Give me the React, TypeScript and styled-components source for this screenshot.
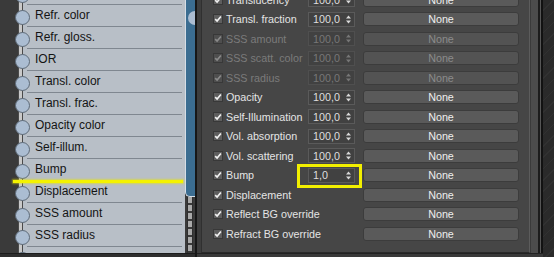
import React from 'react';
import styled, { createGlobalStyle } from 'styled-components';

const GlobalStyle = createGlobalStyle`
  html, body {
    margin: 0;
    padding: 0;
    background: #2b2b2b;
  }
  body {
    width: 554px;
    height: 257px;
    overflow: hidden;
  }
`;

const Screen = styled.div`
  display: flex;
  width: 554px;
  height: 257px;
  overflow: hidden;
  background: #2b2b2b;
`;

/* ---------- left: node editor ---------- */

const NodeArea = styled.div`
  position: relative;
  flex: none;
  width: 195px;
  height: 257px;
  display: flex;
  flex-direction: column;
  background: #3a3a3a;
`;

const NodeBody = styled.div`
  display: flex;
  height: 253px;
  padding-left: 22px;
  overflow: hidden;
`;

const SlotList = styled.div`
  width: 163px;
  margin-top: -17px;
  background: #b8bfc7;
`;

const Slot = styled.div`
  position: relative;
  display: flex;
  align-items: flex-start;
  height: 22px;

  &::before {
    content: '';
    position: absolute;
    left: -4px;
    top: 0;
    bottom: 0;
    width: 3px;
    background: repeating-linear-gradient(#c9c9c9 0 6px, #4a4a4a 6px 8px);
    border-left: 1px solid #4a4a4a;
    border-right: 1px solid #4a4a4a;
  }
`;

const Pin = styled.span`
  position: relative;
  z-index: 1;
  flex: none;
  width: 13px;
  height: 13px;
  margin: 5px 0 0 -7px;
  border-radius: 50%;
  background: #abbdd2;
  border: 1px solid #5d6a78;
`;

const SlotLabel = styled.span`
  flex: 1;
  height: 22px;
  box-sizing: border-box;
  margin: 0 3px 0 -3px;
  padding-left: 8px;
  border-bottom: 1px solid #7f8790;
  font-family: 'Liberation Sans', Arial, sans-serif;
  font-size: 12px;
  line-height: 21px;
  color: #141414;
  white-space: nowrap;
`;

const OutColumn = styled.div`
  display: flex;
  flex-direction: column;
  width: 10px;
  margin-top: 0;
`;

const OutStrip = styled.div`
  position: relative;
  height: 197px;
  box-sizing: border-box;
  overflow: hidden;
  background: #3b6d91;
  border-left: 1px solid #d6dee6;
  border-bottom: 1px solid #d6dee6;
  border-bottom-left-radius: 5px;
`;

const OutPin = styled.span`
  position: absolute;
  left: 2px;
  top: 11px;
  width: 14px;
  height: 14px;
  border-radius: 50%;
  background: #abbdd2;
`;

const OutChain = styled.div`
  flex: 1;
  margin: 0 2px 0 2px;
  background: repeating-linear-gradient(#a9a9a9 0 6px, #3a3a3a 6px 8px);
  border-left: 1px solid #2e2e2e;
  border-right: 1px solid #2e2e2e;
`;

const NodeFooter = styled.div`
  flex: 1;
  background: #2e2e2e;
  border-top: 1px solid #1c1c1c;
`;

const Marker = styled.div`
  position: absolute;
  left: 13px;
  top: 180px;
  width: 170px;
  height: 3px;
  background: #f4f200;
  box-shadow: 0 0 2px 1px rgba(235, 230, 0, 0.55);
  z-index: 5;
`;

/* ---------- right: parameters rollout ---------- */

const ParamPanel = styled.div`
  flex: none;
  width: 348px;
  height: 257px;
  box-sizing: border-box;
  display: flex;
  flex-direction: column;
  border-left: 2px solid #171717;
  background: #3d3d3d;
`;

const ParamMain = styled.div`
  display: flex;
  height: 253px;
  padding-left: 4px;
`;

const Rollout = styled.div`
  width: 330px;
  box-sizing: border-box;
  overflow: hidden;
  background: #464646;
  border-left: 1px solid #303030;
  border-right: 1px solid #5c5c5c;
  border-bottom: 1px solid #2a2a2a;
`;

const ParamList = styled.div`
  margin-top: -10.25px;
  padding-left: 11px;
`;

const ParamRow = styled.div`
  display: grid;
  grid-template-columns: 13px 82px 55px 156px;
  align-items: center;
  height: 19.5px;
`;

const Check = styled.span<{ $disabled?: boolean }>`
  display: flex;
  width: 10px;
  height: 10px;
  box-sizing: border-box;
  background: ${(p) => (p.$disabled ? '#4e4e4e' : '#5e5e5e')};
  border: 1px solid #383838;

  svg {
    display: block;
  }
`;

const ParamLabel = styled.span<{ $disabled?: boolean }>`
  font-family: 'Liberation Sans', Arial, sans-serif;
  font-size: 10.75px;
  color: ${(p) => (p.$disabled ? '#7b7b7b' : '#e4e4e4')};
  white-space: nowrap;
`;

const Spinner = styled.span<{ $disabled?: boolean; $marked?: boolean }>`
  position: relative;
  display: flex;
  align-items: center;
  justify-content: space-between;
  width: 47px;
  height: 15px;
  box-sizing: border-box;
  padding: 0 3px 0 4px;
  background: #414141;
  border: 1px solid ${(p) => (p.$disabled ? '#4f4f4f' : '#5a5a5a')};
  font-family: 'Liberation Sans', Arial, sans-serif;
  font-size: 10.75px;
  color: ${(p) => (p.$disabled ? '#777' : '#dedede')};

  ${(p) =>
    p.$marked &&
    `
    &::after {
      content: '';
      position: absolute;
      left: -12px;
      right: -8px;
      top: -5px;
      bottom: -6px;
      border: 3px solid #f2ef00;
    }
  `}
`;

const MapButton = styled.span<{ $disabled?: boolean }>`
  grid-column: 4;
  display: flex;
  align-items: center;
  justify-content: center;
  height: 14px;
  box-sizing: border-box;
  border-radius: 3px;
  background: ${(p) => (p.$disabled ? '#535353' : '#5a5a5a')};
  border: 1px solid #3c3c3c;
  font-family: 'Liberation Sans', Arial, sans-serif;
  font-size: 10.75px;
  color: ${(p) => (p.$disabled ? '#8b8b8b' : '#eeeeee')};
`;

const ScrollTrack = styled.div`
  width: 7px;
  background: #4c4c4c;
  border-left: 1px solid #3a3a3a;
`;

const PanelEdge = styled.div`
  width: 5px;
  background: linear-gradient(to right, #1c1c1c 0 2px, #565656 2px 3px, #121212 3px 5px);
`;

const ParamFooter = styled.div`
  flex: 1;
  background: #393939;
  border-top: 1px solid #222;
`;

const Viewport = styled.div`
  flex: 1;
  background: repeating-linear-gradient(135deg, #2a2a2a 0 7px, #313131 7px 8px);
`;

const CheckMark: React.FC<{ color: string }> = ({ color }) => (
  <svg width="8" height="8" viewBox="0 0 8 8">
    <path d="M1.2 4.1 L3.1 6.1 L6.9 1.4" fill="none" stroke={color} strokeWidth="1.6" />
  </svg>
);

const Arrows: React.FC<{ color: string }> = ({ color }) => (
  <svg width="5" height="9" viewBox="0 0 5 9">
    <path d="M2.5 0.5 L5 3.5 H0 Z M0 5.5 H5 L2.5 8.5 Z" fill={color} />
  </svg>
);

const slots = [
  '',
  'Refr. color',
  'Refr. gloss.',
  'IOR',
  'Transl. color',
  'Transl. frac.',
  'Opacity color',
  'Self-illum.',
  'Bump',
  'Displacement',
  'SSS amount',
  'SSS radius',
  '',
];

interface Param {
  label: string;
  value?: string;
  disabled?: boolean;
  marked?: boolean;
}

const params: Param[] = [
  { label: 'Translucency', value: '100,0' },
  { label: 'Transl. fraction', value: '100,0' },
  { label: 'SSS amount', value: '100,0', disabled: true },
  { label: 'SSS scatt. color', value: '100,0', disabled: true },
  { label: 'SSS radius', value: '100,0', disabled: true },
  { label: 'Opacity', value: '100,0' },
  { label: 'Self-Illumination', value: '100,0' },
  { label: 'Vol. absorption', value: '100,0' },
  { label: 'Vol. scattering', value: '100,0' },
  { label: 'Bump', value: '1,0', marked: true },
  { label: 'Displacement' },
  { label: 'Reflect BG override' },
  { label: 'Refract BG override' },
];

export default function App() {
  return (
    <>
      <GlobalStyle />
      <Screen>
        <NodeArea>
          <NodeBody>
            <SlotList>
              {slots.map((s, i) => (
                <Slot key={i}>
                  <Pin />
                  <SlotLabel>{s}</SlotLabel>
                </Slot>
              ))}
            </SlotList>
            <OutColumn>
              <OutStrip>
                <OutPin />
              </OutStrip>
              <OutChain />
            </OutColumn>
          </NodeBody>
          <NodeFooter />
          <Marker />
        </NodeArea>

        <ParamPanel>
          <ParamMain>
            <Rollout>
              <ParamList>
                {params.map((p) => (
                  <ParamRow key={p.label}>
                    <Check $disabled={p.disabled}>
                      <CheckMark color={p.disabled ? '#8a8a8a' : '#f2f2f2'} />
                    </Check>
                    <ParamLabel $disabled={p.disabled}>{p.label}</ParamLabel>
                    {p.value ? (
                      <Spinner $disabled={p.disabled} $marked={p.marked}>
                        {p.value}
                        <Arrows color={p.disabled ? '#777' : '#d8d8d8'} />
                      </Spinner>
                    ) : null}
                    <MapButton $disabled={p.disabled}>None</MapButton>
                  </ParamRow>
                ))}
              </ParamList>
            </Rollout>
            <ScrollTrack />
            <PanelEdge />
          </ParamMain>
          <ParamFooter />
        </ParamPanel>

        <Viewport />
      </Screen>
    </>
  );
}
